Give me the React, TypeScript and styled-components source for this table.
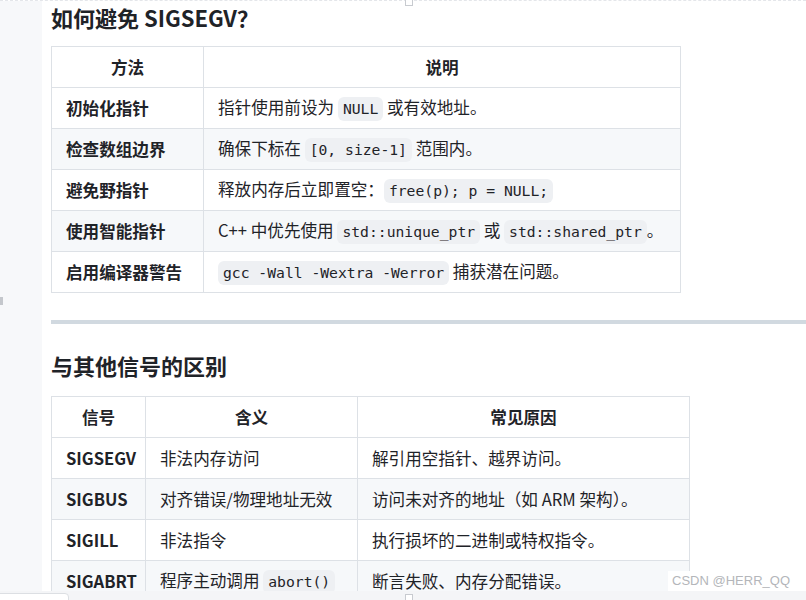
import styled, { createGlobalStyle } from 'styled-components';

const GlobalStyle = createGlobalStyle`
  html, body {
    margin: 0;
    padding: 0;
    background: #ffffff;
  }
  body {
    font-family: "Noto Sans CJK SC", "Noto Sans", sans-serif;
    color: #1f2328;
  }
`;

type Cell = string | { code: string };

const avoidRows: { method: string; note: Cell[] }[] = [
  { method: '初始化指针', note: ['指针使用前设为 ', { code: 'NULL' }, ' 或有效地址。'] },
  { method: '检查数组边界', note: ['确保下标在 ', { code: '[0, size-1]' }, ' 范围内。'] },
  { method: '避免野指针', note: ['释放内存后立即置空：', { code: 'free(p); p = NULL;' }] },
  {
    method: '使用智能指针',
    note: ['C++ 中优先使用 ', { code: 'std::unique_ptr' }, ' 或 ', { code: 'std::shared_ptr' }, '。'],
  },
  { method: '启用编译器警告', note: [{ code: 'gcc -Wall -Wextra -Werror' }, ' 捕获潜在问题。'] },
];

const signalRows: { name: string; meaning: Cell[]; cause: string }[] = [
  { name: 'SIGSEGV', meaning: ['非法内存访问'], cause: '解引用空指针、越界访问。' },
  { name: 'SIGBUS', meaning: ['对齐错误/物理地址无效'], cause: '访问未对齐的地址（如 ARM 架构）。' },
  { name: 'SIGILL', meaning: ['非法指令'], cause: '执行损坏的二进制或特权指令。' },
  { name: 'SIGABRT', meaning: ['程序主动调用 ', { code: 'abort()' }], cause: '断言失败、内存分配错误。' },
];

function renderCell(parts: Cell[]) {
  return parts.map((p, i) => (typeof p === 'string' ? <span key={i}>{p}</span> : <Code key={i}>{p.code}</Code>));
}

function App() {
  return (
    <>
      <GlobalStyle />
      <Page>
        <LeftRail>
          <RailTick />
        </LeftRail>
        <Article>
          <Heading>如何避免 SIGSEGV？</Heading>
          <Table $width={630}>
            <colgroup>
              <col style={{ width: 152 }} />
              <col />
            </colgroup>
            <thead>
              <tr>
                <Th>方法</Th>
                <Th>说明</Th>
              </tr>
            </thead>
            <tbody>
              {avoidRows.map((r) => (
                <Row key={r.method}>
                  <Td $bold>{r.method}</Td>
                  <Td>{renderCell(r.note)}</Td>
                </Row>
              ))}
            </tbody>
          </Table>

          <Divider />

          <Heading $second>与其他信号的区别</Heading>
          <Table $width={639}>
            <colgroup>
              <col style={{ width: 94 }} />
              <col style={{ width: 212 }} />
              <col />
            </colgroup>
            <thead>
              <tr>
                <Th>信号</Th>
                <Th>含义</Th>
                <Th>常见原因</Th>
              </tr>
            </thead>
            <tbody>
              {signalRows.map((r) => (
                <Row key={r.name}>
                  <Td $bold>{r.name}</Td>
                  <Td>{renderCell(r.meaning)}</Td>
                  <Td>{r.cause}</Td>
                </Row>
              ))}
            </tbody>
          </Table>
        </Article>
      </Page>

      <TopHandle />
      <Watermark>CSDN @HERR_QQ</Watermark>
      <BottomBar>
        <BottomTab />
        <BottomHandle />
      </BottomBar>
    </>
  );
}

const Page = styled.div`
  display: flex;
  width: 806px;
  height: 600px;
  overflow: hidden;
  border-top: 1px dashed #e4e6ea;
  box-sizing: border-box;
`;

const LeftRail = styled.div`
  position: relative;
  flex: 0 0 42px;
  background: #f7f8fa;
`;

const RailTick = styled.div`
  position: absolute;
  left: 0;
  top: 296px;
  width: 3px;
  height: 8px;
  background: #c4c7cc;
`;

const Article = styled.main`
  flex: 1;
  padding: 0 0 0 9px;
`;

const Heading = styled.h3<{ $second?: boolean }>`
  margin: ${(p) => (p.$second ? '27px 0 17px' : '2px 0 15px')};
  font-size: 22px;
  line-height: 28px;
  font-weight: 700;
  color: #1f2328;
`;

const Table = styled.table<{ $width: number }>`
  width: ${(p) => p.$width}px;
  table-layout: fixed;
  border-collapse: collapse;
  font-size: 16.6px;
  line-height: 24px;
`;

const Row = styled.tr`
  background: #ffffff;

  &:nth-child(2n) {
    background: #f6f8fa;
  }
`;

const Th = styled.th`
  height: 40px;
  padding: 0 15px;
  border: 1px solid #dde1e6;
  font-weight: 700;
  text-align: center;
  color: #1f2328;
`;

const Td = styled.td<{ $bold?: boolean }>`
  height: 40px;
  padding: 0 14px;
  border: 1px solid #dde1e6;
  font-weight: ${(p) => (p.$bold ? 700 : 400)};
  color: #1f2328;
  white-space: nowrap;
`;

const Code = styled.code`
  display: inline-block;
  padding: 0 5px;
  border-radius: 6px;
  background: #eef0f3;
  font-family: "DejaVu Sans Mono", "Liberation Mono", monospace;
  font-size: 14.7px;
  line-height: 24px;
  color: #1f2328;
`;

const Divider = styled.hr`
  height: 4px;
  margin: 27px 0 0;
  border: 0;
  background: #d1d9e0;
`;

const TopHandle = styled.div`
  position: absolute;
  left: 405px;
  top: -2px;
  width: 6px;
  height: 6px;
  border: 1px solid #c8cbd0;
  background: #ffffff;
`;

const Watermark = styled.div`
  position: absolute;
  right: 16px;
  bottom: 9px;
  padding: 0 0 0 4px;
  background: #ffffff;
  font-family: "Liberation Sans", Arial, sans-serif;
  font-size: 13px;
  line-height: 20px;
  color: #b4b6ba;
`;

const BottomBar = styled.div`
  position: absolute;
  left: 0;
  bottom: 0;
  width: 806px;
  height: 9px;
  background: #f4f5f7;
`;

const BottomTab = styled.div`
  position: absolute;
  left: -1px;
  bottom: -1px;
  width: 68px;
  height: 6px;
  border: 1px solid #dcdfe3;
  border-radius: 0 4px 0 0;
  background: #ffffff;
`;

const BottomHandle = styled.div`
  position: absolute;
  left: 405px;
  bottom: -2px;
  width: 6px;
  height: 6px;
  border: 1px solid #c8cbd0;
  background: #ffffff;
`;

export default App;
